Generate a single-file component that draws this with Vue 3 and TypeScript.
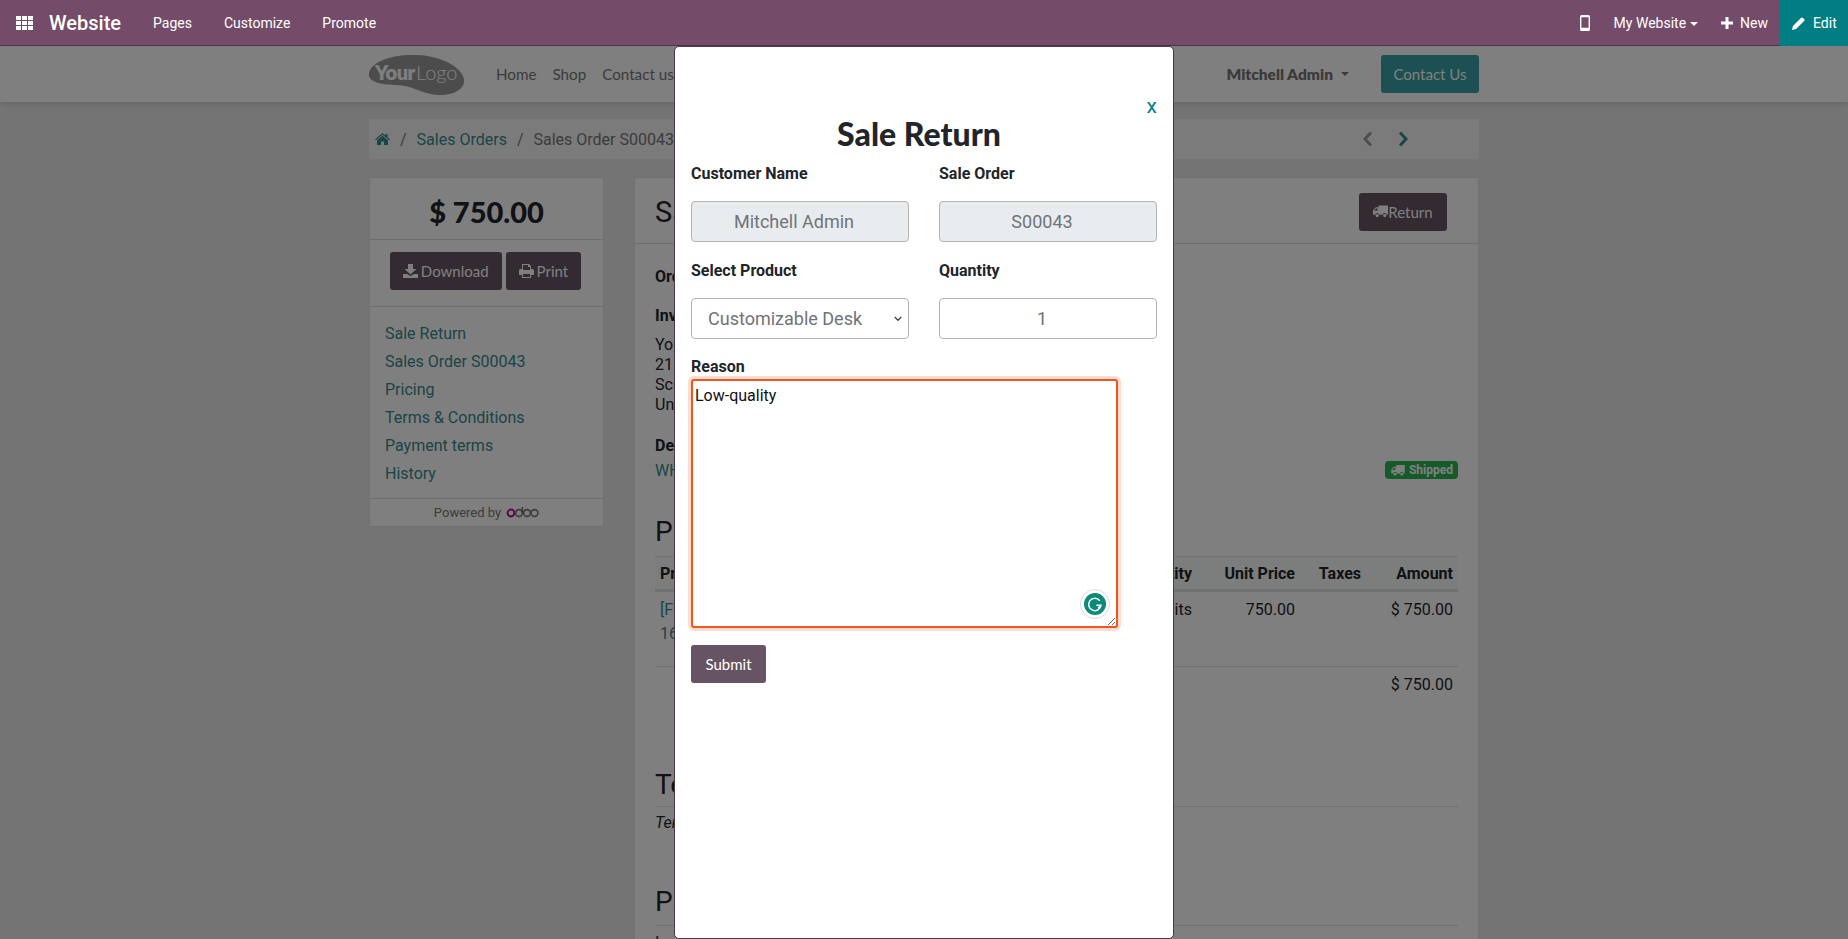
<script setup lang="ts">
import { ref } from "vue";

const topMenu = ["Pages", "Customize", "Promote"];
const siteMenu = ["Home", "Shop", "Contact us"];
const sideLinks = ["Sale Return", "Sales Order S00043", "Pricing", "Terms & Conditions", "Payment terms", "History"];
const address = ["YourCompany", "215 Vine St", "Scranton PA 18503", "United States"];

const product = ref("Customizable Desk");
const reason = ref("Low-quality");
</script>

<template>
	<div class="page">
		<nav class="topbar">
			<svg class="apps" viewBox="0 0 17 14" width="17" height="14" fill="#fff">
				<rect x="0" y="0" width="5" height="4" /><rect x="6" y="0" width="5" height="4" /><rect x="12" y="0" width="5" height="4" />
				<rect x="0" y="5" width="5" height="4" /><rect x="6" y="5" width="5" height="4" /><rect x="12" y="5" width="5" height="4" />
				<rect x="0" y="10" width="5" height="4" /><rect x="6" y="10" width="5" height="4" /><rect x="12" y="10" width="5" height="4" />
			</svg>
			<span class="brand">Website</span>
			<a v-for="item in topMenu" :key="item" class="top-link">{{ item }}</a>
			<div class="top-right">
				<svg class="phone" viewBox="0 0 10 16" width="10" height="16">
					<path fill="#fff" fill-rule="evenodd" d="M1.5 0h7A1.5 1.5 0 0 1 10 1.5v13A1.5 1.5 0 0 1 8.5 16h-7A1.5 1.5 0 0 1 0 14.5v-13A1.5 1.5 0 0 1 1.5 0zM1.4 2.2v10.6h7.2V2.2z" />
				</svg>
				<span class="top-site">My Website<i class="caret white"></i></span>
				<span class="top-new">
					<svg viewBox="0 0 12 12" width="12" height="12"><path fill="#fff" d="M4.5 0h3v4.5H12v3H7.5V12h-3V7.5H0v-3h4.5z" /></svg>
					New
				</span>
				<span class="top-edit">
					<svg viewBox="0 0 14 14" width="13" height="13"><path fill="#fff" d="M0 14l1-4.4L9.6 1a1.6 1.6 0 0 1 2.2 0l1.2 1.2a1.6 1.6 0 0 1 0 2.2L4.400 13z" /></svg>
					Edit
				</span>
			</div>
		</nav>

		<header class="site-header">
			<div class="container header-row">
				<svg class="logo" viewBox="0 0 95 41" width="95" height="41">
					<path fill="#999" d="M0 19C2 8 22 0 48 1c26 1 45 13 47 24 2 11-13 17-26 16C52 40 44 31 27 31 13 31-2 28 0 19z" />
					<text x="6" y="26" class="logo-your">Your</text>
					<text x="47" y="26" class="logo-text">Logo</text>
				</svg>
				<a v-for="item in siteMenu" :key="item" class="site-link">{{ item }}</a>
				<span class="user">Mitchell Admin<i class="caret dark"></i></span>
				<a class="contact-btn">Contact Us</a>
			</div>
		</header>

		<main class="container">
			<div class="breadcrumb">
				<svg class="home" viewBox="0 0 15 12" width="15" height="12">
					<path fill="#358a8e" d="M7.500 0l3 2.500V1h2v3.200L15 6.300l-.8.900-6.700-5.500L.8 7.200 0 6.300zM2 7.300l5.500-4.600L13 7.300V12H9V8.500H6V12H2z" />
				</svg>
				<span class="sep">/</span>
				<a class="crumb">Sales Orders</a>
				<span class="sep">/</span>
				<span class="crumb-active">Sales Order S00043</span>
				<div class="pager">
					<svg viewBox="0 0 10 16" width="10" height="16"><path d="M8 1.500L2 8l6 6.500" fill="none" stroke="#9a9a9a" stroke-width="3" /></svg>
					<svg viewBox="0 0 10 16" width="10" height="16"><path d="M2 1.500L8 8l-6 6.500" fill="none" stroke="#358a8e" stroke-width="3" /></svg>
				</div>
			</div>

			<div class="columns">
				<aside class="side-card">
					<div class="total">$ 750.00</div>
					<div class="side-actions">
						<a class="dark-btn">
							<svg viewBox="0 0 15 14" width="15" height="14">
								<path fill="currentColor" d="M5 0h5v5h3.500L7.500 10.500 1.500 5H5zM0 10h4l3.500 2L11 10h4v4H0z" />
							</svg>
							Download
						</a>
						<a class="dark-btn">
							<svg viewBox="0 0 15 14" width="15" height="14">
								<path fill="currentColor" fill-rule="evenodd" d="M3 0h7l2 2v3h1.500A1.500 1.500 0 0 1 15 6.500V11h-3v3H3v-3H0V6.500A1.500 1.500 0 0 1 1.500 5H3zM4 1v5h7V3H9V1zM4 10v3h7v-3z" />
							</svg>
							Print
						</a>
					</div>
					<div class="side-links">
						<a v-for="link in sideLinks" :key="link">{{ link }}</a>
					</div>
					<div class="powered">
						Powered by
						<svg viewBox="0 0 33 12" width="33" height="12" fill="none" stroke-width="1.600">
							<circle cx="5" cy="7" r="3.400" stroke="#b3108f" stroke-width="2" />
							<circle cx="13" cy="7" r="3.400" stroke="#777" />
							<path d="M16.400 1v6" stroke="#777" />
							<circle cx="21" cy="7" r="3.400" stroke="#777" />
							<circle cx="28.500" cy="7" r="3.400" stroke="#777" />
						</svg>
					</div>
				</aside>

				<section class="order-card">
					<div class="order-head">
						<h2>Sales Order</h2>
						<a class="dark-btn">
							<svg class="truck" viewBox="0 0 16 13" width="15" height="13">
								<path fill="currentColor" d="M6 0h10v10h-1.500a2 2 0 0 0-4 0H6.500a2 2 0 0 0-4 0H0V5.500L3 2h3zM1.200 5.800h3.600V3.300H3.300z" />
								<circle cx="4.500" cy="10.800" r="1.700" fill="currentColor" /><circle cx="12.500" cy="10.800" r="1.700" fill="currentColor" />
							</svg>Return
						</a>
					</div>
					<div class="order-body">
						<p class="strong date">Order Date:</p>
						<p class="strong inv">Invoicing and Shipping Address</p>
						<p v-for="line in address" :key="line" class="addr">{{ line }}</p>
						<p class="strong delivery">Delivery Orders</p>
						<div class="delivery-row">
							<a>WH/OUT/00043</a>
							<span class="badge">
								<svg viewBox="0 0 16 13" width="14" height="11">
									<path fill="currentColor" d="M6 0h10v10h-1.500a2 2 0 0 0-4 0H6.500a2 2 0 0 0-4 0H0V5.500L3 2h3zM1.200 5.800h3.600V3.300H3.300z" />
									<circle cx="4.500" cy="10.800" r="1.700" fill="currentColor" /><circle cx="12.500" cy="10.800" r="1.700" fill="currentColor" />
								</svg>
								Shipped
							</span>
						</div>
						<h3 class="products-title">Products</h3>
						<div class="table-row table-head">
							<span>Products</span>
							<span class="num">Quantity</span>
							<span class="num">Unit Price</span>
							<span class="num">Taxes</span>
							<span class="num">Amount</span>
						</div>
						<div class="table-row table-line">
							<a>[FURN_0006] Customizable Desk<br />160x80cm</a>
							<span class="num">1.00 Units</span>
							<span class="num">750.00</span>
							<span class="num"></span>
							<span class="num">$ 750.00</span>
						</div>
						<div class="table-total">$ 750.00</div>
						<h3 class="section-title terms">Terms &amp; Conditions</h3>
						<p class="terms-text">Terms and conditions</p>
						<h3 class="section-title pay">Payment terms</h3>
						<p class="addr pay-text">Immediate Payment</p>
					</div>
				</section>
			</div>
		</main>

		<div class="backdrop">
			<div class="modal">
				<a class="close">x</a>
				<h1>Sale Return</h1>
				<form class="return-form" @submit.prevent>
					<div class="field">
						<label>Customer Name</label>
						<input class="control readonly" value="Mitchell Admin" disabled />
					</div>
					<div class="field">
						<label>Sale Order</label>
						<input class="control readonly" value="S00043" disabled />
					</div>
					<div class="field">
						<label>Select Product</label>
						<select v-model="product" class="control select">
							<option>Customizable Desk</option>
						</select>
					</div>
					<div class="field">
						<label>Quantity</label>
						<input class="control qty" type="number" value="1" />
					</div>
					<div class="field wide">
						<label class="reason-label">Reason</label>
						<div class="reason-wrap">
							<textarea v-model="reason"></textarea>
							<span class="grammarly">
								<svg viewBox="0 0 22 22" width="22" height="22">
									<circle cx="11" cy="11" r="11" fill="#0b8a78" />
									<path d="M15.800 7.700A6.200 6.200 0 1 0 17 12.200H12.400" fill="none" stroke="#fff" stroke-width="1.500" />
									<path d="M16.800 12.200l-2.600 3" fill="none" stroke="#fff" stroke-width="1.500" />
								</svg>
							</span>
						</div>
					</div>
					<div class="field wide">
						<button class="submit" type="submit">Submit</button>
					</div>
				</form>
			</div>
		</div>
	</div>
</template>

<style>
html,
body {
	margin: 0;
	background: #e9e9e9;
}
</style>

<style scoped>
.page {
	position: relative;
	height: 939px;
	overflow: hidden;
	font-family: Roboto, "Liberation Sans", sans-serif;
	font-size: 16px;
	color: #212529;
	background: #e9e9e9;
}

p,
h1,
h2,
h3 {
	margin: 0;
}

a {
	color: #358a8e;
}

.caret {
	display: inline-block;
	border-left: 4px solid transparent;
	border-right: 4px solid transparent;
	border-top: 4px solid;
	vertical-align: middle;
}

.caret.white {
	margin-left: 4px;
	color: #fff;
}

.caret.dark {
	margin-left: 8px;
	margin-bottom: 3px;
	color: #777;
}

/* top bar */
.topbar {
	position: relative;
	z-index: 2;
	display: flex;
	align-items: center;
	height: 45px;
	border-bottom: 1px solid #4e3448;
	background: #744c69;
	color: #fff;
	font-size: 14px;
}

.apps {
	margin-left: 16px;
}

.brand {
	margin-left: 16px;
	margin-right: 32px;
	font-size: 20px;
	font-weight: 500;
}

.top-link {
	margin-right: 32px;
	color: #fff;
}

.top-right {
	display: flex;
	align-items: center;
	align-self: stretch;
	margin-left: auto;
}

.phone {
	margin-right: 24px;
}

.top-site {
	margin-right: 23px;
}

.top-new {
	display: flex;
	align-items: center;
	gap: 7px;
	margin-right: 12px;
}

.top-edit {
	display: flex;
	align-items: center;
	align-self: stretch;
	gap: 8px;
	width: 68px;
	margin-bottom: -1px;
	padding-left: 12px;
	box-sizing: border-box;
	background: #017e84;
}

/* site header */
.container {
	width: 1110px;
	margin: 0 auto;
}

.site-header {
	height: 56px;
	background: #fff;
	box-shadow: 0 2px 6px rgba(0, 0, 0, 0.12);
	font-family: Lato, "Noto Sans", sans-serif;
}

.header-row {
	display: flex;
	align-items: center;
	height: 100%;
}

.logo {
	margin-right: 32px;
}

.logo-your {
	font: 800 20px Lato, sans-serif;
	letter-spacing: -0.5px;
	fill: #fff;
}

.logo-text {
	font: 300 20px Lato, sans-serif;
	fill: #fff;
}

.site-link {
	margin-right: 16px;
	color: #777;
	font-size: 15.200px;
}

.user {
	margin-left: auto;
	margin-right: 32px;
	color: #777;
	font-size: 15.500px;
	font-weight: 800;
}

.contact-btn {
	display: flex;
	align-items: center;
	justify-content: center;
	width: 98px;
	height: 38px;
	border-radius: 3px;
	background: #38a0a4;
	color: #fff;
	font-size: 15px;
}

/* breadcrumb */
.breadcrumb {
	display: flex;
	align-items: center;
	height: 40px;
	margin-top: 17px;
	padding: 0 6px;
	border-radius: 3px;
	background: #f7f7f7;
}

.sep {
	margin: 0 10px;
	color: #777;
}

.crumb-active {
	color: #777;
}

.pager {
	display: flex;
	gap: 25px;
	margin-left: auto;
	margin-right: 65px;
}

/* columns */
.columns {
	display: flex;
	align-items: flex-start;
	gap: 30px;
	margin-top: 18px;
}

.side-card,
.order-card {
	border: 1px solid #e2e2e2;
	border-radius: 3px;
	background: #fff;
	box-sizing: border-box;
}

.side-card {
	width: 235px;
	flex-shrink: 0;
}

.total {
	display: flex;
	align-items: center;
	justify-content: center;
	height: 62px;
	padding-top: 6px;
	box-sizing: border-box;
	border-bottom: 1px solid #ddd;
	font-family: Lato, "Noto Sans", sans-serif;
	font-size: 29px;
	font-weight: 900;
}

.side-actions {
	display: flex;
	justify-content: center;
	gap: 4px;
	padding: 12px 2px 16px 0;
	border-bottom: 1px solid #ddd;
}

.dark-btn {
	display: inline-flex;
	align-items: center;
	gap: 3px;
	height: 38px;
	padding: 0 13px;
	box-sizing: border-box;
	border-radius: 3px;
	background: #665464;
	color: #fff;
	font-family: Lato, "Noto Sans", sans-serif;
	font-size: 15px;
}

.side-links {
	display: flex;
	flex-direction: column;
	padding: 13px 15px 10px;
	border-bottom: 1px solid #ddd;
	line-height: 28px;
}

.powered {
	display: flex;
	align-items: center;
	justify-content: center;
	gap: 5px;
	height: 26px;
	padding-bottom: 1px;
	color: #777;
	font-size: 13px;
}

.order-card {
	flex: 1;
	height: 900px;
}

.order-head {
	display: flex;
	align-items: center;
	justify-content: space-between;
	height: 66px;
	padding: 2px 31px 0 20px;
	border-bottom: 1px solid #ddd;
	box-sizing: border-box;
}

.order-head h2 {
	font-size: 29px;
	font-weight: 400;
}

.order-head .dark-btn {
	gap: 0;
	width: 88px;
	padding: 0;
	justify-content: center;
}

.order-body {
	padding: 21px 20px 0;
}

.strong {
	font-weight: 700;
	line-height: 24px;
}

.inv {
	margin-top: 15px;
	margin-bottom: 7px;
}

.addr {
	line-height: 20px;
}

.delivery {
	margin-top: 19px;
}

.delivery-row {
	display: flex;
	align-items: center;
	justify-content: space-between;
	height: 24px;
}

.badge {
	display: flex;
	align-items: center;
	gap: 4px;
	height: 18px;
	padding: 0 5px 0 6px;
	border-radius: 4px;
	background: #2ab552;
	color: #fff;
	font-size: 12px;
	font-weight: 700;
}

.products-title,
.section-title {
	font-size: 28px;
	font-weight: 400;
	line-height: 34px;
}

.products-title {
	margin-top: 33px;
	padding-bottom: 7px;
}

.table-row {
	display: grid;
	grid-template-columns: 1fr 100px 103px 66px 92px;
	padding: 0 5px;
	box-sizing: border-box;
}

.num {
	text-align: right;
}

.table-head {
	height: 36px;
	border-top: 1px solid #dee2e6;
	border-bottom: 3px solid #dee2e6;
	background: #f8fafa;
	font-weight: 700;
	line-height: 34px;
}

.table-line {
	height: 75px;
	padding-top: 6px;
	border-bottom: 1px solid #dee2e6;
	line-height: 24px;
}

.table-total {
	padding: 6px 5px 0;
	height: 33px;
	text-align: right;
	line-height: 24px;
}

.section-title.terms {
	margin-top: 62px;
	padding-bottom: 4px;
	border-bottom: 1px solid #dee2e6;
}

.terms-text {
	margin-top: 4px;
	font-style: italic;
	line-height: 24px;
}

.section-title.pay {
	margin-top: 50px;
	padding-bottom: 6px;
	border-bottom: 1px solid #dee2e6;
}

.pay-text {
	margin-top: 7px;
}

/* modal */
.backdrop {
	position: absolute;
	inset: 46px 0 0;
	display: flex;
	justify-content: center;
	background: rgba(0, 0, 0, 0.5);
}

.modal {
	position: relative;
	display: flex;
	flex-direction: column;
	width: 500px;
	height: 893px;
	padding: 0 16px;
	box-sizing: border-box;
	border: 1px solid #4e3448;
	border-radius: 5px;
	background: #fff;
}

.close {
	align-self: flex-end;
	margin-top: 47px;
	color: #017e84;
	font-size: 21px;
	line-height: 24px;
}

.modal h1 {
	margin-top: -2px;
	margin-right: 10px;
	text-align: center;
	font-family: Lato, "Noto Sans", sans-serif;
	font-size: 32px;
	font-weight: 900;
	line-height: 36px;
}

.return-form {
	display: grid;
	grid-template-columns: 218px 218px;
	gap: 17px 30px;
	margin-top: 10px;
}

.field {
	display: flex;
	flex-direction: column;
}

.wide {
	grid-column: 1 / -1;
}

label {
	margin-bottom: 15px;
	font-weight: 700;
	line-height: 24px;
}

.control {
	width: 100%;
	height: 41px;
	padding: 0;
	box-sizing: border-box;
	border: 1px solid #b3b3b6;
	border-radius: 4px;
	background: #fff;
	color: #6f7479;
	font-family: inherit;
	font-size: 18px;
	text-align: center;
}

.control:disabled {
	background: #e9ecef;
}

.readonly {
	padding-right: 12px;
}

.qty {
	padding-left: 3px;
}

.select {
	appearance: none;
	padding-left: 16px;
	text-align: left;
	background: #fff url("data:image/svg+xml,%3Csvg xmlns='http://www.w3.org/2000/svg' viewBox='0 0 8 6' width='8' height='6'%3E%3Cpath d='M.7 1l3.300 3.300L7.300 1' fill='none' stroke='%23444' stroke-width='1.300'/%3E%3C/svg%3E") no-repeat right 6px center;
}

.reason-label {
	margin-top: 1px;
	margin-bottom: 2px;
	line-height: 20px;
}

.reason-wrap {
	position: relative;
	width: 427px;
}

textarea {
	display: block;
	width: 427px;
	height: 249px;
	padding: 5px 2px;
	box-sizing: border-box;
	border: 2px solid #f0561f;
	border-radius: 3px;
	outline: none;
	box-shadow: 0 0 0 3px #ffdccf;
	color: #111;
	font-family: inherit;
	font-size: 16px;
	line-height: 20px;
}

.grammarly {
	position: absolute;
	right: 8px;
	bottom: 9px;
	display: flex;
	align-items: center;
	justify-content: center;
	width: 28px;
	height: 28px;
	border: 1px solid #d8dce4;
	border-radius: 50%;
	background: #fff;
}

.submit {
	align-self: flex-start;
	width: 75px;
	height: 38px;
	margin-top: 0;
	border: none;
	border-radius: 3px;
	background: #665464;
	color: #fff;
	font-family: Lato, "Noto Sans", sans-serif;
	font-size: 15px;
}
</style>
